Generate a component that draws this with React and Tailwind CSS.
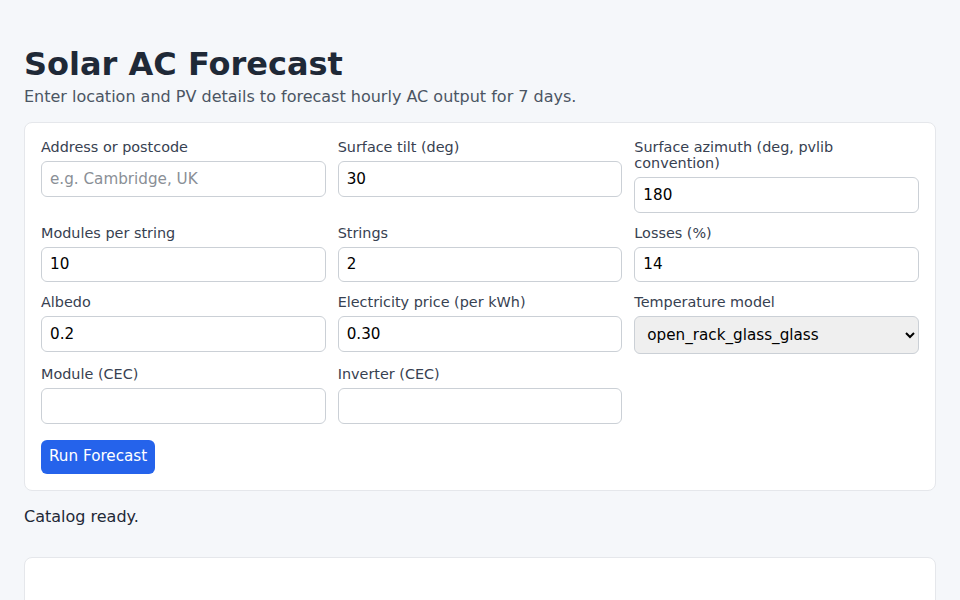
import React from "react";

const font = { fontFamily: '"DejaVu Sans", Verdana, sans-serif' };

function Field({ label, children }) {
  return (
    <div className="flex flex-col">
      <label className="text-[14.4px] leading-[16px] text-[#374151] mb-[6px]">{label}</label>
      {children}
    </div>
  );
}

function Input({ value, placeholder }) {
  return (
    <input
      defaultValue={value}
      placeholder={placeholder}
      className="h-[35.6px] w-full rounded-[6px] border border-[#cbd0d6] bg-white px-[8px] text-[15.2px] text-black placeholder:text-[#8a8f96] outline-none"
    />
  );
}

export default function App() {
  return (
    <div className="min-h-[600px] bg-[#f5f7fa] px-6 pt-[45px] pb-10 text-[#1f2937]" style={font}>
      <h1 className="m-0 text-[32px] leading-[38px] font-bold text-[#1f2937]">Solar AC Forecast</h1>
      <p className="mt-[4px] text-[16px] leading-[19px] text-[#4b5563]">
        Enter location and PV details to forecast hourly AC output for 7 days.
      </p>
      <div className="mt-[16px] rounded-[8px] border border-[#e5e7eb] bg-white p-4">
        <div className="grid grid-cols-3 gap-x-3 gap-y-3 items-start">
          <Field label="Address or postcode">
            <Input placeholder="e.g. Cambridge, UK" />
          </Field>
          <Field label="Surface tilt (deg)">
            <Input value="30" />
          </Field>
          <Field label="Surface azimuth (deg, pvlib convention)">
            <Input value="180" />
          </Field>
          <Field label="Modules per string">
            <Input value="10" />
          </Field>
          <Field label="Strings">
            <Input value="2" />
          </Field>
          <Field label="Losses (%)">
            <Input value="14" />
          </Field>
          <Field label="Albedo">
            <Input value="0.2" />
          </Field>
          <Field label="Electricity price (per kWh)">
            <Input value="0.30" />
          </Field>
          <Field label="Temperature model">
            <select
              defaultValue="open_rack_glass_glass"
              className="h-[38px] w-full rounded-[6px] border border-[#cbd0d6] bg-[#efefef] px-[8px] text-[15.2px] text-black"
            >
              <option value="open_rack_glass_glass">open_rack_glass_glass</option>
              <option value="close_mount_glass_glass">close_mount_glass_glass</option>
            </select>
          </Field>
          <Field label="Module (CEC)">
            <Input />
          </Field>
          <Field label="Inverter (CEC)">
            <Input />
          </Field>
        </div>
        <button className="mt-4 h-[34px] rounded-[6px] bg-[#2563eb] px-[8px] text-[15.2px] text-white">
          Run Forecast
        </button>
      </div>
      <p className="mt-[16px] text-[16px] leading-[19px] text-[#1f2937]">Catalog ready.</p>
      <div className="mt-[31px] h-[120px] rounded-[8px] border border-[#e5e7eb] bg-white"></div>
    </div>
  );
}
